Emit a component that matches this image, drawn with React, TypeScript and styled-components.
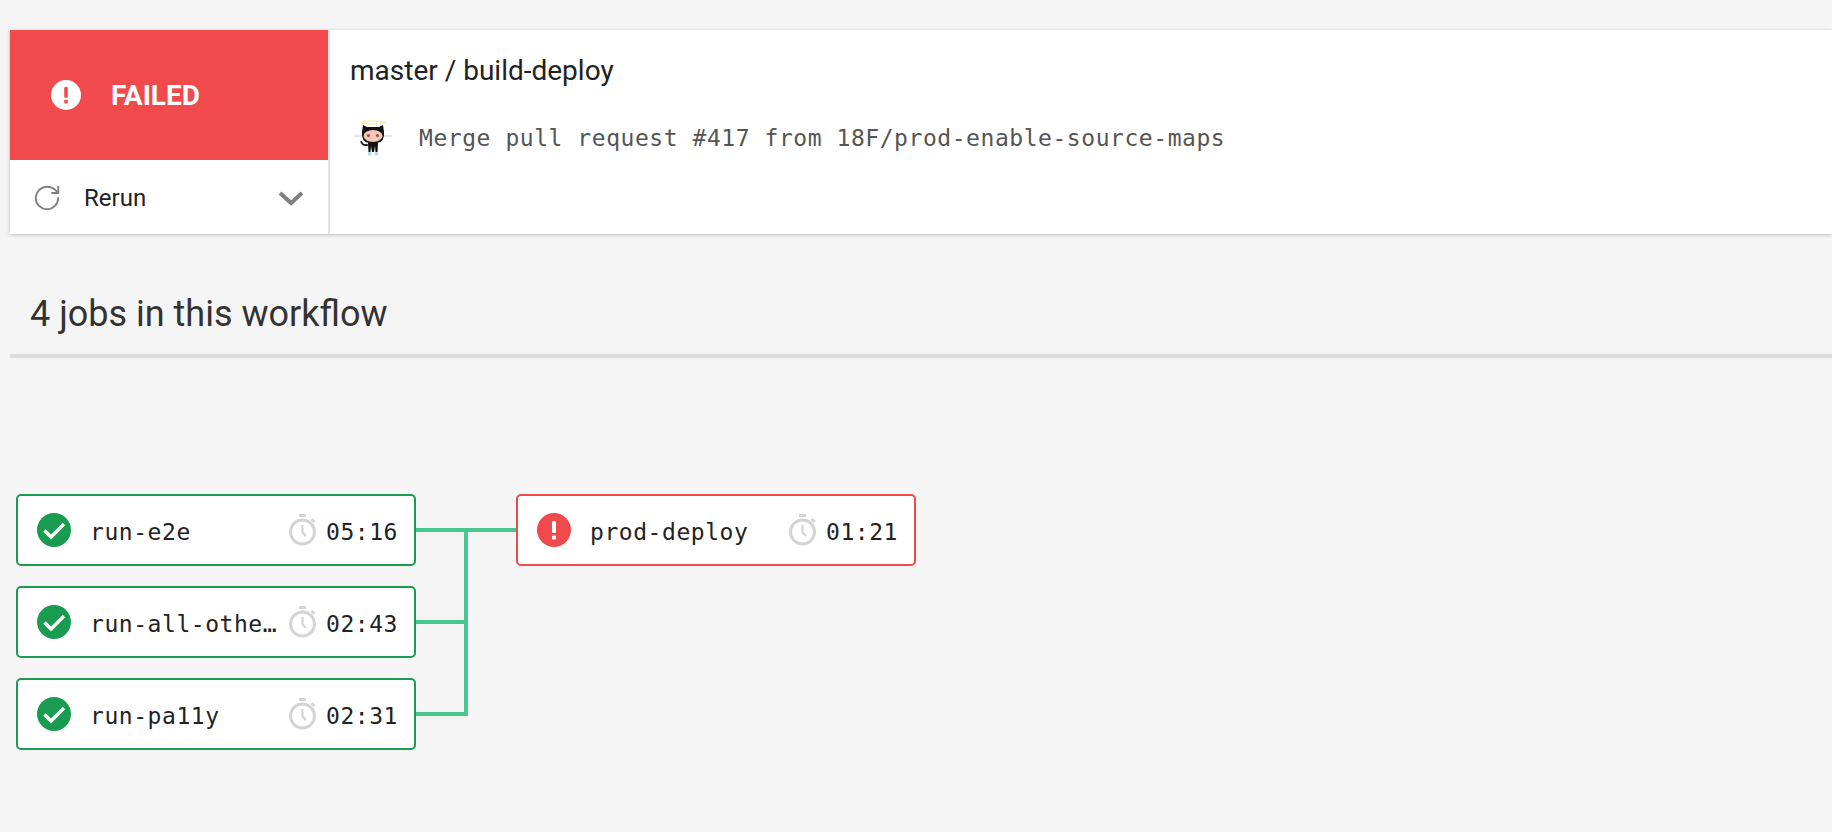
import React from "react";
import styled, { createGlobalStyle } from "styled-components";
import { RotateCw } from "lucide-react";

const GREEN = "#1a9c50";
const RED = "#f04a4c";
const LINK = "#48c78e";
const MONO = `"DejaVu Sans Mono", "Liberation Mono", monospace`;

const GlobalStyle = createGlobalStyle`
  html, body {
    margin: 0;
    background: #f5f5f5;
    overflow: hidden;
  }
  body {
    font-family: Roboto, "Liberation Sans", sans-serif;
    color: #222;
  }
`;

const Page = styled.div`
  width: 1832px;
  height: 832px;
  box-sizing: border-box;
  padding: 30px 0 0 10px;
`;

const Header = styled.section`
  display: flex;
  height: 204px;
  background: #fff;
  box-shadow: 0 1px 4px rgba(0, 0, 0, 0.22);
`;

const StatusColumn = styled.div`
  flex: 0 0 318px;
  display: flex;
  flex-direction: column;
`;

const StatusBanner = styled.div`
  height: 130px;
  background: ${RED};
  display: flex;
  align-items: center;
  gap: 30px;
  padding-left: 41px;
  color: #fff;
  font-size: 28px;
  font-weight: 700;
`;

const RerunRow = styled.div`
  flex: 1;
  display: flex;
  align-items: center;
  padding: 2px 24px 0 22px;
  font-size: 24px;
  color: #222;
`;

const RerunLabel = styled.span`
  flex: 1;
  margin-left: 22px;
`;

const Details = styled.div`
  flex: 1;
  border-left: 2px solid #e3e3e3;
  padding: 25px 0 0 20px;
`;

const Branch = styled.div`
  font-size: 28px;
  line-height: 32px;
  color: #222;
`;

const Commit = styled.div`
  display: flex;
  align-items: center;
  margin-top: 33px;
  gap: 26px;
  padding-left: 3px;
  font-family: ${MONO};
  font-size: 23px;
  letter-spacing: 0.55px;
  color: #555;
`;

const SectionTitle = styled.h2`
  margin: 58px 0 0;
  padding: 0 0 18px 20px;
  border-bottom: 4px solid #dcdcdc;
  font-size: 36px;
  line-height: 44px;
  font-weight: 400;
  color: #333;
`;

const Graph = styled.div`
  display: flex;
  align-items: flex-start;
  margin: 136px 0 0 6px;
`;

const JobColumn = styled.div`
  display: flex;
  flex-direction: column;
  gap: 20px;
`;

const JobCard = styled.div<{ $failed?: boolean }>`
  width: 400px;
  height: 72px;
  box-sizing: border-box;
  display: flex;
  align-items: center;
  padding: 0 16px 0 19px;
  background: #fff;
  border: 2px solid ${(p) => (p.$failed ? RED : GREEN)};
  border-radius: 5px;
  font-family: ${MONO};
  font-size: 23px;
  letter-spacing: 0.55px;
  color: #222;
`;

const JobName = styled.span`
  flex: 1;
  min-width: 0;
  margin: 0 9px 0 19px;
  padding-top: 3px;
  overflow: hidden;
  white-space: nowrap;
  text-overflow: ellipsis;
`;

const JobTime = styled.span`
  margin-left: 10px;
  padding-top: 3px;
`;

const Connector = styled.svg`
  flex: 0 0 100px;
  display: block;
`;

const FailIcon = ({ size, bg, fg }: { size: number; bg: string; fg: string }) => (
  <svg width={size} height={size} viewBox="0 0 34 34" style={{ flexShrink: 0 }}>
    <circle cx="17" cy="17" r="17" fill={bg} />
    <rect x="15" y="8" width="4" height="12" rx="1" fill={fg} />
    <rect x="15" y="22.5" width="4" height="4" rx="0.8" fill={fg} />
  </svg>
);

const PassIcon = () => (
  <svg width="34" height="34" viewBox="0 0 34 34" style={{ flexShrink: 0 }}>
    <circle cx="17" cy="17" r="17" fill={GREEN} />
    <path d="M7.5 17.5 L14 24 L27 11" fill="none" stroke="#fff" strokeWidth="3.4" />
  </svg>
);

const ClockIcon = () => (
  <svg width="27" height="32" viewBox="0 0 27 32" style={{ flexShrink: 0 }}>
    <g fill="none" stroke="#d4d4d4">
      <circle cx="13.5" cy="18" r="12" strokeWidth="3" />
      <path d="M13.5 11 V18.5 L17 22" strokeWidth="2.2" />
      <path d="M10 1.5 H17" strokeWidth="3" />
      <path d="M22.5 5 L25.5 8" strokeWidth="3" />
    </g>
  </svg>
);

const Chevron = () => (
  <svg width="26" height="16" viewBox="0 0 26 16">
    <path d="M2 3 L13 13 L24 3" fill="none" stroke="#808080" strokeWidth="4" />
  </svg>
);

// rough angel octocat
const Octocat = () => (
  <svg width="40" height="36" viewBox="0 0 40 36" style={{ flexShrink: 0 }}>
    <ellipse cx="20" cy="2.6" rx="13" ry="2" fill="#f6eda0" />
    <ellipse cx="20" cy="2.6" rx="8" ry="1" fill="#fff" />
    <path d="M1 16 H9 M31 16 H39" stroke="#ccc" strokeWidth="1" />
    <path d="M9 12 L10 5 L14 7 H26 L30 5 L31 12 Q32 22 24 23 H16 Q8 22 9 12 Z" fill="#111" />
    <ellipse cx="20" cy="16" rx="9.5" ry="6" fill="#f4c7b6" />
    <circle cx="15.5" cy="15.5" r="1.6" fill="#b0444c" />
    <circle cx="24.5" cy="15.5" r="1.6" fill="#b0444c" />
    <path d="M15 23 H25 L24.5 32 H22.5 L22 26 L21 32 H19 L18 26 L17.5 32 H15.5 Z" fill="#111" />
    <path d="M15 25 Q9 26 8 21" fill="none" stroke="#111" strokeWidth="1.6" />
    <rect x="15" y="32" width="3.6" height="3.5" fill="#bcdcf2" />
    <rect x="21.5" y="32" width="3.6" height="3.5" fill="#bcdcf2" />
  </svg>
);

type Job = { name: string; time: string; failed?: boolean };

const upstream: Job[] = [
  { name: "run-e2e", time: "05:16" },
  { name: "run-all-other-tests", time: "02:43" },
  { name: "run-pa11y", time: "02:31" },
];

const JobItem = ({ job }: { job: Job }) => (
  <JobCard $failed={job.failed}>
    {job.failed ? <FailIcon size={34} bg={RED} fg="#fff" /> : <PassIcon />}
    <JobName>{job.name}</JobName>
    <ClockIcon />
    <JobTime>{job.time}</JobTime>
  </JobCard>
);

export default function App() {
  return (
    <Page>
      <GlobalStyle />
      <Header>
        <StatusColumn>
          <StatusBanner>
            <FailIcon size={30} bg="#fff" fg={RED} />
            FAILED
          </StatusBanner>
          <RerunRow>
            <RotateCw size={30} color="#808080" strokeWidth={1.5} />
            <RerunLabel>Rerun</RerunLabel>
            <Chevron />
          </RerunRow>
        </StatusColumn>
        <Details>
          <Branch>master / build-deploy</Branch>
          <Commit>
            <Octocat />
            Merge pull request #417 from 18F/prod-enable-source-maps
          </Commit>
        </Details>
      </Header>
      <SectionTitle>4 jobs in this workflow</SectionTitle>
      <Graph>
        <JobColumn>
          {upstream.map((job) => (
            <JobItem key={job.name} job={job} />
          ))}
        </JobColumn>
        <Connector width="100" height="256" viewBox="0 0 100 256">
          <path
            d="M0 36 H100 M0 128 H50 M0 220 H50 M50 36 V222"
            fill="none"
            stroke={LINK}
            strokeWidth="4"
          />
        </Connector>
        <JobItem job={{ name: "prod-deploy", time: "01:21", failed: true }} />
      </Graph>
    </Page>
  );
}
